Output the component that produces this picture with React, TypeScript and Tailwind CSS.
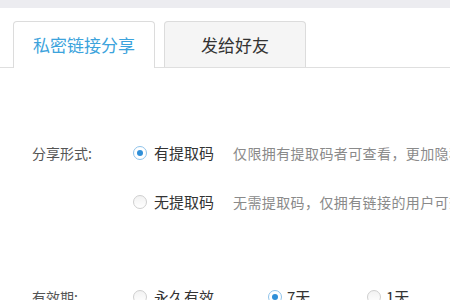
import React from "react";

function Radio({ checked }: { checked?: boolean }) {
  return checked ? (
    <span className="w-[14px] h-[14px] rounded-full border border-[#8fc3ea] bg-white flex items-center justify-center shrink-0">
      <span className="w-[6px] h-[6px] rounded-full bg-[#2f8fd8]" />
    </span>
  ) : (
    <span className="w-[14px] h-[14px] rounded-full border border-[#cfcfcf] bg-gradient-to-b from-[#f2f2f2] to-white shrink-0" />
  );
}

export default function App() {
  return (
    <div
      className="w-[450px] h-[300px] overflow-hidden bg-white"
      style={{ fontFamily: '"Noto Sans CJK SC", "Noto Sans", sans-serif' }}
    >
      <div className="h-[8px] bg-[#ececf0]" />
      <div className="h-[60px] flex items-end pl-[13px] border-b border-[#dfdfdf]">
        <div className="w-[142px] h-[47px] -mb-px bg-white border border-b-0 border-[#dcdcdc] rounded-t-[4px] flex items-center justify-center text-[17px] text-[#3ca3dc] shrink-0">
          私密链接分享
        </div>
        <div className="ml-[9px] w-[142px] h-[46px] bg-[#f5f5f5] border border-b-0 border-[#dcdcdc] rounded-t-[4px] flex items-center justify-center text-[17px] text-[#333] shrink-0">
          发给好友
        </div>
      </div>

      <div className="pt-[75px] flex flex-col whitespace-nowrap">
        <div className="h-[20px] flex items-center overflow-hidden">
          <div className="w-[133px] shrink-0 pl-[32px] text-[14px] text-[#555]">分享形式:</div>
          <Radio checked />
          <span className="ml-[7px] w-[79px] shrink-0 text-[15px] text-[#333]">有提取码</span>
          <span className="shrink-0 text-[14px] tracking-[0.4px] text-[#8a8a8a]">仅限拥有提取码者可查看，更加隐私安全</span>
        </div>
        <div className="h-[20px] mt-[29px] flex items-center overflow-hidden">
          <div className="w-[133px] shrink-0" />
          <Radio />
          <span className="ml-[7px] w-[79px] shrink-0 text-[15px] text-[#333]">无提取码</span>
          <span className="shrink-0 text-[14px] tracking-[0.4px] text-[#8a8a8a]">无需提取码，仅拥有链接的用户可查看</span>
        </div>
        <div className="h-[20px] mt-[75px] flex items-center">
          <div className="w-[133px] shrink-0 pl-[32px] text-[14px] text-[#555]">有效期:</div>
          <div className="w-[135px] shrink-0 flex items-center">
            <Radio />
            <span className="ml-[7px] text-[15px] text-[#333]">永久有效</span>
          </div>
          <div className="w-[99px] shrink-0 flex items-center">
            <Radio checked />
            <span className="ml-[5px] text-[15px] text-[#333]">7天</span>
          </div>
          <div className="shrink-0 flex items-center">
            <Radio />
            <span className="ml-[5px] text-[15px] text-[#333]">1天</span>
          </div>
        </div>
      </div>
    </div>
  );
}
